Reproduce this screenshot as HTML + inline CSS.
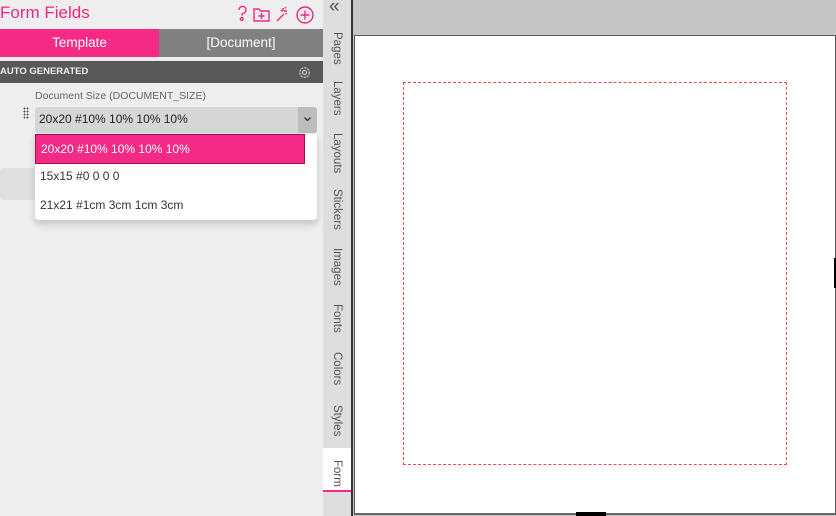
<!DOCTYPE html>
<html><head><style>
*{box-sizing:border-box;margin:0;padding:0}
body{width:836px;height:516px;overflow:hidden;position:relative;font-family:"Liberation Sans",sans-serif;background:#eee}
.abs{position:absolute}
.vt{position:absolute;left:323px;width:28px;writing-mode:vertical-rl;font-size:11.5px;color:#555;text-align:center;line-height:28px}
</style></head><body>
<div class="abs" style="left:0;top:0;width:323px;height:516px;background:#eeeeee"></div>
<div class="abs" style="left:0;top:3px;font-size:17px;color:#f0287f">Form Fields</div>
<svg class="abs" style="left:234px;top:3px" width="84" height="22" viewBox="0 0 84 22" fill="none" stroke="#f0287f" stroke-width="1.4">
<path d="M5 7a3.5 3.5 0 1 1 4 3.4c-1 .4-1.2 1-1.2 2.2"/><circle cx="7.8" cy="16" r="1.4"/>
<path d="M20 6h5l1.5 2H35v10H20z"/><path d="M27.5 10v6M24.5 13h6"/>
<path d="M43 18l7-7M49 5v3M53 8h-3M47 7l1.5 1.5M52 4l-1 1.5M53 11l-1.5-.5"/>
<circle cx="71" cy="12" r="8"/><path d="M71 7.5v9M66.5 12h9"/>
</svg>
<div class="abs" style="left:0;top:29px;width:159px;height:28px;background:#f52a86;color:#fff;font-size:13.5px;text-align:center;line-height:28px">Template</div>
<div class="abs" style="left:159px;top:29px;width:164px;height:28px;background:#808080;color:#fff;font-size:13.5px;text-align:center;line-height:28px">[Document]</div>
<div class="abs" style="left:0;top:61px;width:323px;height:22px;background:#585858;color:#eee;font-size:9.5px;font-weight:bold;line-height:22px">AUTO GENERATED</div>
<svg class="abs" style="left:298px;top:66px" width="13" height="13" viewBox="0 0 13 13" fill="none" stroke="#ddd" stroke-width="1.1"><circle cx="6.5" cy="6.5" r="2"/><circle cx="6.5" cy="6.5" r="4.8" stroke-dasharray="2 1.2"/></svg>
<div class="abs" style="left:35px;top:90px;font-size:10.5px;color:#666">Document Size (DOCUMENT_SIZE)</div>
<div class="abs" style="left:23px;top:107px;width:6px;height:12px;background:radial-gradient(circle,#555 0.8px,transparent 1px) 0 0/3px 3px"></div>
<div class="abs" style="left:35px;top:107px;width:282px;height:26px;background:#d6d6d6;border-radius:3px"></div>
<div class="abs" style="left:298px;top:107px;width:19px;height:26px;background:#bdbdbd;border-radius:0 3px 3px 0"></div>
<svg class="abs" style="left:303px;top:115px" width="9" height="8"><path d="M1.5 2.5l3 3 3-3" stroke="#333" fill="none" stroke-width="1.3"/></svg>
<div class="abs" style="left:39px;top:112px;font-size:12px;color:#222">20x20 #10% 10% 10% 10%</div>
<div class="abs" style="left:0;top:168px;width:40px;height:32px;background:#e0e0e0;border-radius:3px"></div>
<div class="abs" style="left:35px;top:134px;width:282px;height:86px;background:#fff;border-radius:0 0 4px 4px;box-shadow:0 4px 8px rgba(0,0,0,.18)"></div>
<div class="abs" style="left:35px;top:134px;width:270px;height:30px;background:#f52a86;border:1px solid #a0104e;color:#fff;font-size:12px;line-height:28px;padding-left:5px">20x20 #10% 10% 10% 10%</div>
<div class="abs" style="left:40px;top:169px;font-size:12px;color:#333">15x15 #0 0 0 0</div>
<div class="abs" style="left:40px;top:198px;font-size:12px;color:#333">21x21 #1cm 3cm 1cm 3cm</div>
<div class="abs" style="left:323px;top:0;width:28px;height:516px;background:#dedede"></div>
<div class="abs" style="left:329px;top:-4px;font-size:19px;color:#555">«</div>
<div class="vt" style="top:32px">Pages</div>
<div class="vt" style="top:81px">Layers</div>
<div class="vt" style="top:133px">Layouts</div>
<div class="vt" style="top:189px">Stickers</div>
<div class="vt" style="top:248px">Images</div>
<div class="vt" style="top:304px">Fonts</div>
<div class="vt" style="top:352px">Colors</div>
<div class="vt" style="top:405px">Styles</div>
<div class="abs" style="left:323px;top:448px;width:28px;height:44px;background:#fff;border-bottom:2px solid #f52a86"></div>
<div class="vt" style="top:460px">Form</div>
<div class="abs" style="left:351px;top:0;width:2px;height:516px;background:#333"></div>
<div class="abs" style="left:353px;top:0;width:483px;height:516px;background:#c6c6c6"></div>
<div class="abs" style="left:354px;top:35px;width:482px;height:480px;background:#fff;border:1px solid #555;border-bottom:2px solid #666"></div>
<div class="abs" style="left:403px;top:82px;width:384px;height:383px;border:1px dashed #f04a4a"></div>
<div class="abs" style="left:576px;top:512px;width:30px;height:4px;background:#000"></div>
<div class="abs" style="left:834px;top:258px;width:2px;height:30px;background:#000"></div>
</body></html>
